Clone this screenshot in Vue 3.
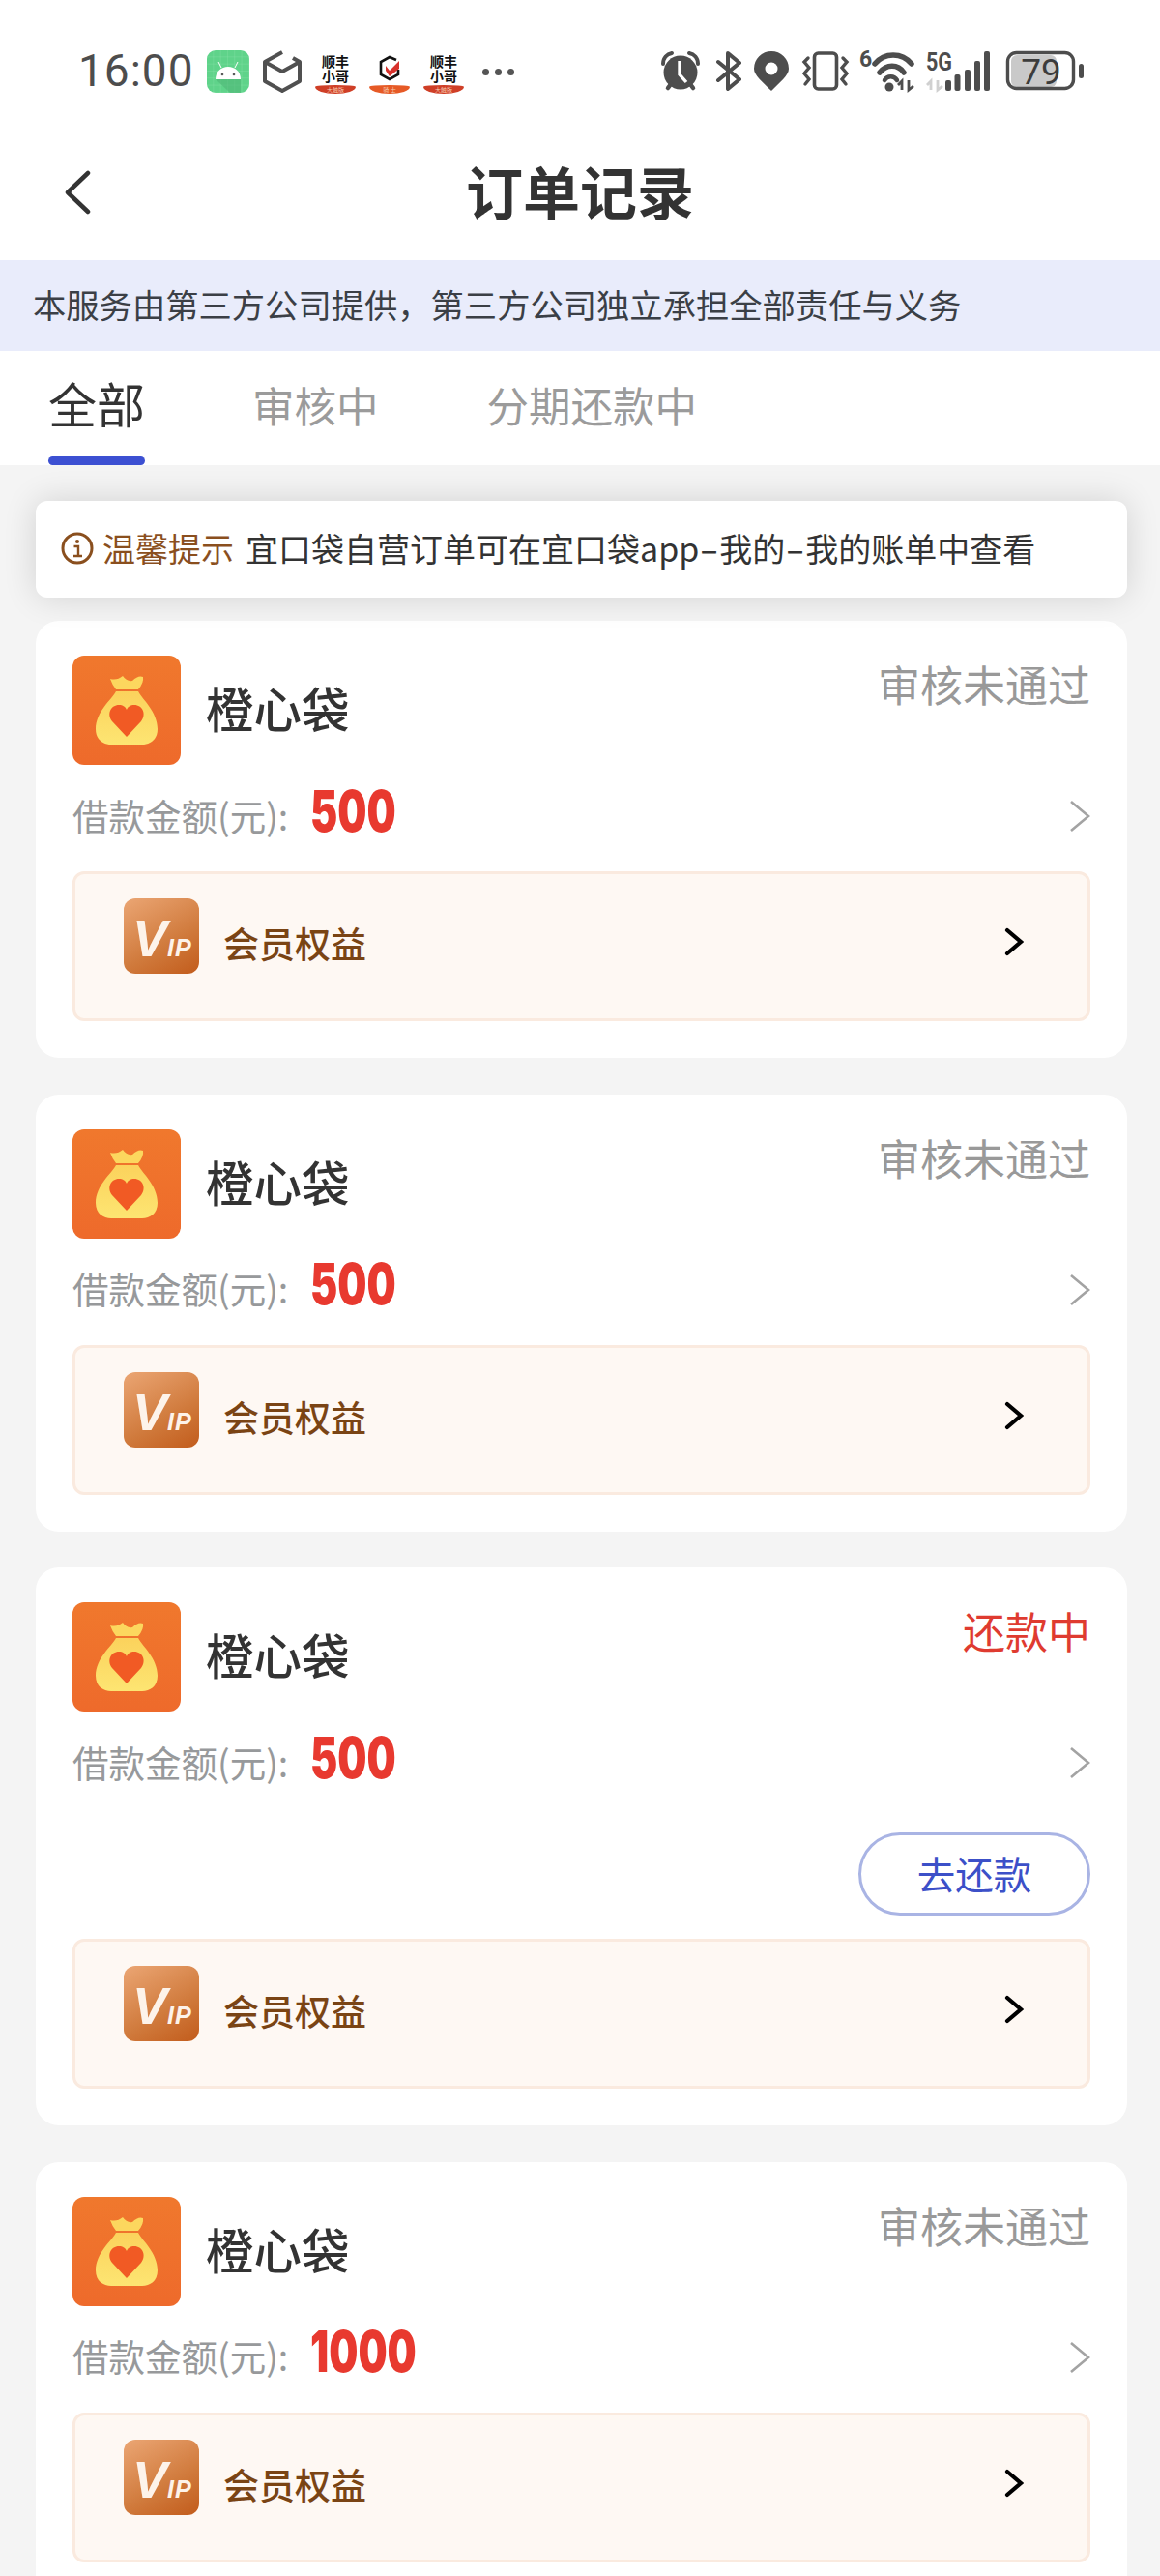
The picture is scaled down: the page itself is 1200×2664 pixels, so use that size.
<script setup>
// order list data
const orders = [
  { id: 1, amount: "500", status: "审核未通过", repaying: false },
  { id: 2, amount: "500", status: "审核未通过", repaying: false },
  { id: 3, amount: "500", status: "还款中", repaying: true },
  { id: 4, amount: "1000", status: "审核未通过", repaying: false },
];

const tabs = ["全部", "审核中", "分期还款中"];
</script>

<template>
  <div class="page">
    <div class="status-bar">
      <span class="time">16:00</span>

      <svg class="ic-android" width="44" height="44" viewBox="0 0 44 44">
        <defs>
          <pattern id="grid" width="7.3" height="7.3" patternUnits="userSpaceOnUse">
            <path d="M7.3 0V7.3H0" fill="none" stroke="#8be2aa" stroke-width="0.6" />
          </pattern>
        </defs>
        <rect width="44" height="44" rx="9" fill="#5fd38a" />
        <rect width="44" height="44" rx="9" fill="url(#grid)" />
        <path d="M9 30 L35 30 L35 44 L24 44Z" fill="#4cb574" opacity=".55" />
        <path d="M9 30C9 22 15 17 22 17S35 22 35 30Z" fill="#fff" />
        <path d="M15 18l-3-6M29 18l3-6" stroke="#fff" stroke-width="1" />
        <circle cx="16" cy="25" r="1.3" fill="#5a5a5a" />
        <circle cx="28" cy="25" r="1.3" fill="#5a5a5a" />
      </svg>

      <svg class="ic-box" width="40" height="44" viewBox="0 0 40 44">
        <path d="M20 2 L2 12 V32 L20 42 L38 32 V12 L31 8 M2 12 L20 22 L38 12" fill="none" stroke="#505050" stroke-width="4" stroke-linejoin="round" />
      </svg>

      <div class="sf-icon sf-first">
        <span class="sf-text">顺丰<br />小哥</span>
        <span class="sf-tag">大触版</span>
      </div>

      <div class="sf-icon knight">
        <svg width="24" height="27" viewBox="0 0 24 27">
          <path d="M19 5 L12 2 L3 7 V20 L12 25 L21 20 V15" fill="none" stroke="#111" stroke-width="2.6" />
          <path d="M8 11 L12 16 L22 6 V14 L12 22 L8 16Z" fill="#d8322c" />
        </svg>
        <span class="sf-tag sf-tag-orange">骑 士</span>
      </div>

      <div class="sf-icon">
        <span class="sf-text">顺丰<br />小哥</span>
        <span class="sf-tag">大触版</span>
      </div>

      <div class="dots"><i></i><i></i><i></i></div>

      <!-- right side cluster, coords are page coords -->
      <svg class="right-icons" width="438" height="56" viewBox="685 44 438 56">
        <!-- alarm -->
        <circle cx="705" cy="75" r="17.5" fill="#4d4d4d" />
        <path d="M687 66C687 60 691 56 696 55M723 66C723 60 719 56 714 55" fill="none" stroke="#4d4d4d" stroke-width="4" stroke-linecap="round" />
        <path d="M692 91l3-4M718 91l-3-4" stroke="#4d4d4d" stroke-width="4.5" stroke-linecap="round" />
        <path d="M704 63V77L711 85" fill="none" stroke="#fff" stroke-width="3.4" />
        <!-- bluetooth -->
        <path d="M744 64 L766 82 L754 92 V55 L766 65 L744 83" fill="none" stroke="#4d4d4d" stroke-width="4" stroke-linecap="round" stroke-linejoin="round" />
        <!-- pin -->
        <path d="M799 94C790 85 781 78 781 71A18 18 0 0 1 817 71C817 78 808 85 799 94Z" fill="#4d4d4d" />
        <circle cx="799" cy="71" r="6.5" fill="#fff" />
        <!-- vibrate -->
        <rect x="843.5" y="55" width="23" height="37" rx="4" fill="none" stroke="#4d4d4d" stroke-width="3.6" />
        <path d="M837 60l-4 4 5 6-5 6 5 6-4 5M873 60l4 4-5 6 5 6-5 6 4 5" fill="none" stroke="#4d4d4d" stroke-width="3.4" stroke-linecap="round" />
        <!-- wifi 6 -->
        <text x="890" y="69" class="st-small">6</text>
        <path d="M906 66C916 54 934 54 944 66" fill="none" stroke="#4d4d4d" stroke-width="5.5" stroke-linecap="round" />
        <path d="M911 75C918 66 930 66 936 75" fill="none" stroke="#4d4d4d" stroke-width="5.5" stroke-linecap="round" />
        <path d="M916 83C919 78 926 78 929 83" fill="none" stroke="#4d4d4d" stroke-width="4.5" stroke-linecap="round" />
        <circle cx="921" cy="90" r="4.5" fill="#4d4d4d" />
        <path d="M934 93V84L930 88M941 83V93L946 89" fill="none" stroke="#4d4d4d" stroke-width="2.8" />
        <!-- 5G signal -->
        <text x="959" y="73" class="st-small st-5g" textLength="27" lengthAdjust="spacingAndGlyphs">5G</text>
        <path d="M964 93V84L960 88M971 83V93L976 89" fill="none" stroke="#d0d0d0" stroke-width="2.8" />
        <rect x="979" y="83" width="6" height="11" rx="2" fill="#4d4d4d" />
        <rect x="988.5" y="77" width="6" height="17" rx="2" fill="#4d4d4d" />
        <rect x="999" y="72" width="6" height="22" rx="2" fill="#4d4d4d" />
        <rect x="1009" y="63" width="6" height="31" rx="2" fill="#4d4d4d" />
        <rect x="1019" y="53" width="6" height="41" rx="2" fill="#4d4d4d" />
        <!-- battery -->
        <rect x="1047" y="57" width="47" height="33" rx="6" fill="#c9c9c9" />
        <rect x="1043.5" y="54.5" width="68" height="37" rx="9" fill="none" stroke="#4d4d4d" stroke-width="3.4" />
        <rect x="1117" y="66" width="5" height="15" rx="2.5" fill="#4d4d4d" />
        <text x="1078" y="87" text-anchor="middle" class="st-batt">79</text>
      </svg>
    </div>

    <div class="nav">
      <svg class="back" width="28" height="46" viewBox="0 0 28 46">
        <path d="M25 3 L4 23 L25 43" fill="none" stroke="#333" stroke-width="4.5" stroke-linecap="round" stroke-linejoin="round" />
      </svg>
      <h1 class="title">订单记录</h1>
    </div>

    <div class="notice">本服务由第三方公司提供，第三方公司独立承担全部责任与义务</div>

    <div class="tabs">
      <div v-for="(t, i) in tabs" :key="t" class="tab" :class="{ active: i === 0 }">{{ t }}</div>
    </div>

    <div class="content">
      <div class="tips">
        <svg class="tips-ic" width="34" height="34" viewBox="0 0 34 34">
          <circle cx="17" cy="17" r="15" fill="none" stroke="#8a4f1e" stroke-width="3" />
          <circle cx="17" cy="10" r="2" fill="#8a4f1e" />
          <path d="M13.5 15H18V24M13 25H22" fill="none" stroke="#8a4f1e" stroke-width="2.4" />
        </svg>
        <span class="tips-label">温馨提示</span>
        <span class="tips-text">宜口袋自营订单可在宜口袋app<span class="dash">-</span>我的<span class="dash">-</span>我的账单中查看</span>
      </div>

      <div v-for="o in orders" :key="o.id" class="card">
        <div class="card-head">
          <div class="logo">
            <svg width="112" height="113" viewBox="0 0 112 113">
              <defs>
                <linearGradient id="bag" x1="0" y1="0" x2="0" y2="1">
                  <stop offset="0" stop-color="#fbd25c" />
                  <stop offset="1" stop-color="#fde572" />
                </linearGradient>
              </defs>
              <path d="M39 24Q46 26 52 21Q56 27 62 26Q68 20 73 22Q74 28 68 35H45Q41 30 39 24Z" fill="#fcd75e" />
              <path d="M45 37H68C72 45 88 58 88 76C88 87 80 92 72 92H40C32 92 24 87 24 76C24 58 41 45 45 37Z" fill="url(#bag)" />
              <path d="M56 84L41 68C35 60 40 51 48 51C52 51 55 53 56 56C57 53 60 51 64 51C72 51 77 60 71 68Z" fill="#f15a24" />
            </svg>
          </div>
          <span class="name">橙心袋</span>
          <span class="status" :class="{ red: o.repaying }">{{ o.status }}</span>
        </div>

        <div class="amount-row">
          <span class="label">借款金额(元):</span>
          <span class="amount">{{ o.amount }}</span>
          <svg class="more" width="22" height="34" viewBox="0 0 22 34">
            <path d="M2 2L20 17L2 32" fill="none" stroke="#a3a3a3" stroke-width="2.6" />
          </svg>
        </div>

        <div v-if="o.repaying" class="btn-row">
          <div class="pay-btn">去还款</div>
        </div>

        <div class="vip-box" :class="{ 'after-btn': o.repaying }">
          <div class="vip-ic">
            <svg width="78" height="78" viewBox="0 0 78 78">
              <text x="9" y="60" class="vip-mark"><tspan class="vip-v">V</tspan><tspan class="vip-ip">IP</tspan></text>
            </svg>
          </div>
          <span class="vip-text">会员权益</span>
          <svg class="vip-arrow" width="20" height="30" viewBox="0 0 20 30">
            <path d="M3 3L17 15L3 27" fill="none" stroke="#000" stroke-width="4.2" stroke-linecap="round" />
          </svg>
        </div>
      </div>
    </div>
  </div>
</template>

<style scoped>
.page {
  width: 1200px;
  height: 2664px;
  overflow: hidden;
  background: #f4f4f4;
  font-family: "Noto Sans CJK SC", "Noto Sans", sans-serif;
  color: #333;
}

.status-bar {
  height: 124px;
  box-sizing: border-box;
  background: #fff;
  padding: 50px 0 0 81px;
  display: flex;
  align-items: flex-start;
  position: relative;
}

.time {
  font-family: Roboto, sans-serif;
  font-size: 46px;
  line-height: 46px;
  letter-spacing: 1px;
  color: #4d4d4d;
  width: 133px;
}

.ic-android {
  margin-top: 2px;
}

.ic-box {
  margin: 2px 0 0 14px;
}

.sf-icon {
  width: 42px;
  margin-left: 14px;
  display: flex;
  flex-direction: column;
  align-items: center;
  padding-top: 6px;
}

.sf-first {
  margin-left: 14px;
}

.knight svg {
  height: 27px;
  margin: 1px 0 1px;
}

.sf-text {
  font-size: 14px;
  line-height: 14.5px;
  font-weight: 700;
  color: #111;
  text-align: center;
  height: 29px;
}

.sf-tag {
  width: 42px;
  height: 9px;
  margin-top: 3px;
  font-size: 6px;
  line-height: 9px;
  text-align: center;
  color: #f6c9b0;
  background: #cf3f27;
  border-radius: 50% 50% 50% 50% / 20% 20% 80% 80%;
}

.sf-tag-orange {
  background: #e65a26;
}

.dots {
  display: flex;
  gap: 6px;
  margin: 21px 0 0 19px;
}

.dots i {
  width: 7px;
  height: 7px;
  border-radius: 50%;
  background: #555;
}

.right-icons {
  margin: -6px 78px 0 auto;
}

.st-small {
  font-family: "Roboto", sans-serif;
  font-size: 23px;
  font-weight: 700;
  fill: #4d4d4d;
}

.st-5g {
  font-size: 26px;
}

.st-batt {
  font-family: "Roboto", sans-serif;
  font-size: 37px;
  fill: #3c3c3c;
}

.nav {
  height: 145px;
  background: #fff;
  position: relative;
  display: flex;
  align-items: center;
  justify-content: center;
}

.back {
  position: absolute;
  left: 66px;
  top: 52px;
}

.title {
  margin: 0;
  font-size: 59px;
  font-weight: 700;
  line-height: 70px;
  color: #333;
}

.notice {
  height: 94px;
  background: #e9ecfb;
  padding-left: 34px;
  font-size: 34.3px;
  line-height: 91px;
  color: #3b3f46;
  white-space: nowrap;
}

.tabs {
  height: 118px;
  background: #fff;
  display: flex;
  padding-left: 50px;
}

.tab {
  font-size: 43.5px;
  line-height: 112px;
  color: #9b9b9b;
  margin-right: 112px;
  position: relative;
}

.tab.active {
  font-size: 50px;
  line-height: 106px;
  color: #333;
  margin-right: 111px;
}

.tab.active::after {
  content: "";
  position: absolute;
  left: 0;
  right: 0;
  bottom: 0;
  height: 9px;
  border-radius: 5px;
  background: #3c50d2;
}

.content {
  padding: 37px 34px 0 37px;
  display: flex;
  flex-direction: column;
}

.tips {
  height: 100px;
  box-sizing: border-box;
  background: #fff;
  border-radius: 12px;
  box-shadow: 0 0 34px rgba(0, 0, 0, 0.14);
  display: flex;
  align-items: center;
  padding: 0 0 3px 26px;
  margin-bottom: 24px;
  white-space: nowrap;
  position: relative;
}

.tips-label {
  margin-left: 9px;
  font-size: 34px;
  color: #8a4f1e;
}

.tips-text {
  margin-left: 12px;
  font-size: 34px;
  color: #333;
}

.dash {
  display: inline-block;
  width: 21px;
  text-align: center;
  transform: scaleX(1.7);
}

.card {
  background: #fff;
  border-radius: 24px;
  padding: 36px 38px 38px;
  margin-bottom: 37.5px;
}

.card-head {
  display: flex;
  align-items: center;
  height: 113px;
}

.logo {
  width: 112px;
  height: 113px;
  border-radius: 12px;
  background: linear-gradient(180deg, #f0782d, #ee6a2b);
}

.name {
  margin-left: 26px;
  font-size: 49.5px;
  font-weight: 500;
  color: #333;
  position: relative;
  top: -3px;
}

.status {
  margin-left: auto;
  align-self: flex-start;
  font-size: 44px;
  line-height: 58px;
  color: #999;
}

.status.red {
  color: #df3b30;
}

.amount-row {
  height: 78px;
  margin-top: 12px;
  display: flex;
  align-items: center;
}

.label {
  font-size: 37.5px;
  color: #97999b;
}

.amount {
  margin-left: 23px;
  font-family: Inter, Roboto, sans-serif;
  font-size: 59px;
  font-weight: 900;
  color: #e8392f;
  display: inline-block;
  transform: scaleX(0.72);
  transform-origin: left center;
  position: relative;
  top: -4px;
}

.more {
  margin-left: auto;
  position: relative;
  top: 2px;
}

.btn-row {
  display: flex;
  justify-content: flex-end;
  margin-top: 35px;
}

.pay-btn {
  width: 240px;
  height: 86px;
  box-sizing: border-box;
  border: 3px solid #a9b4e4;
  border-radius: 43px;
  font-size: 39.5px;
  line-height: 78px;
  text-align: center;
  color: #3c50c8;
}

.vip-box {
  height: 155px;
  box-sizing: border-box;
  margin-top: 20px;
  border: 3px solid #faeadf;
  border-radius: 12px;
  background: #fef8f3;
  display: flex;
  align-items: flex-start;
  padding: 25px 0 0 50px;
}

.vip-box.after-btn {
  margin-top: 24px;
}

.vip-ic {
  width: 78px;
  height: 78px;
  border-radius: 12px;
  background: linear-gradient(150deg, #eba674, #d07a3c 60%, #c25c1c);
}

.vip-mark {
  font-family: "Liberation Sans", sans-serif;
  font-weight: 700;
  font-style: italic;
  fill: #fdf3ea;
}

.vip-v {
  font-size: 54px;
}

.vip-ip {
  font-size: 25px;
  letter-spacing: 1px;
}

.vip-text {
  margin-left: 25px;
  font-size: 37px;
  font-weight: 500;
  color: #7a4414;
  height: 78px;
  line-height: 78px;
  position: relative;
  top: 7px;
}

.vip-arrow {
  margin: 30px 66px 0 auto;
}
</style>
